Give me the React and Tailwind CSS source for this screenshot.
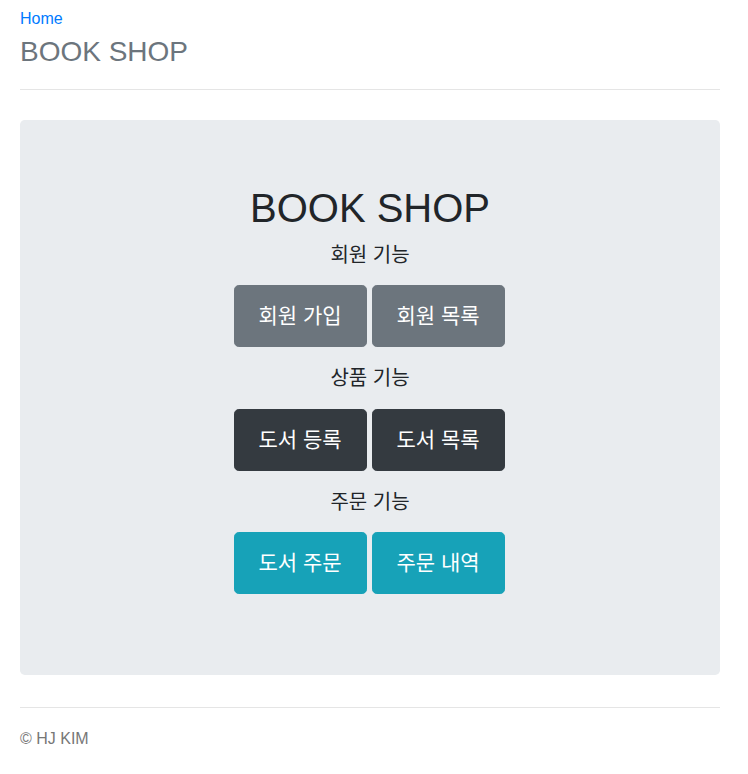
import React from 'react';

const groups = [
  { title: '회원 기능', color: 'bg-[#6c757d] border-[#6c757d]', buttons: ['회원 가입', '회원 목록'], top: 'mt-2' },
  { title: '상품 기능', color: 'bg-[#343a40] border-[#343a40]', buttons: ['도서 등록', '도서 목록'], top: 'mt-4' },
  { title: '주문 기능', color: 'bg-[#17a2b8] border-[#17a2b8]', buttons: ['도서 주문', '주문 내역'], top: 'mt-4' },
];

const App = () => {
  return (
    <div className="min-h-screen bg-white">
      <div className="max-w-[740px] px-5 font-['Liberation_Sans','Noto_Sans_CJK_KR',sans-serif] text-[#212529]">
        {/* Header */}
        <div className="border-b border-[#e5e5e5] pt-[7px] pb-[20px]">
          <a href="#" className="block text-base leading-6 text-[#007bff]">Home</a>
          <h3 className="mt-[4px] text-[28px] leading-[33.6px] text-[#6c757d]">BOOK SHOP</h3>
        </div>

        {/* Jumbotron */}
        <div className="mt-[30px] rounded-[4.8px] bg-[#e9ecef] pt-16 pb-[81px] text-center">
          <h1 className="text-[40px] leading-[48px]">BOOK SHOP</h1>
          {groups.map((g) => (
            <div key={g.title} className={g.top}>
              <p className="text-[20px] leading-[30px]">{g.title}</p>
              <div className="mt-[15.5px] flex justify-center gap-[5px] pr-[2px]">
                {g.buttons.map((b) => (
                  <button
                    key={b}
                    className={`h-[62px] w-[133px] rounded-[4.8px] border text-[21px] text-white ${g.color}`}
                  >
                    {b}
                  </button>
                ))}
              </div>
            </div>
          ))}
        </div>

        {/* Footer */}
        <div className="mt-8 border-t border-[#e5e5e5] pt-[19px]">
          <p className="text-base leading-6 text-[#777]">© HJ KIM</p>
        </div>
      </div>
    </div>
  );
};

export default App;
